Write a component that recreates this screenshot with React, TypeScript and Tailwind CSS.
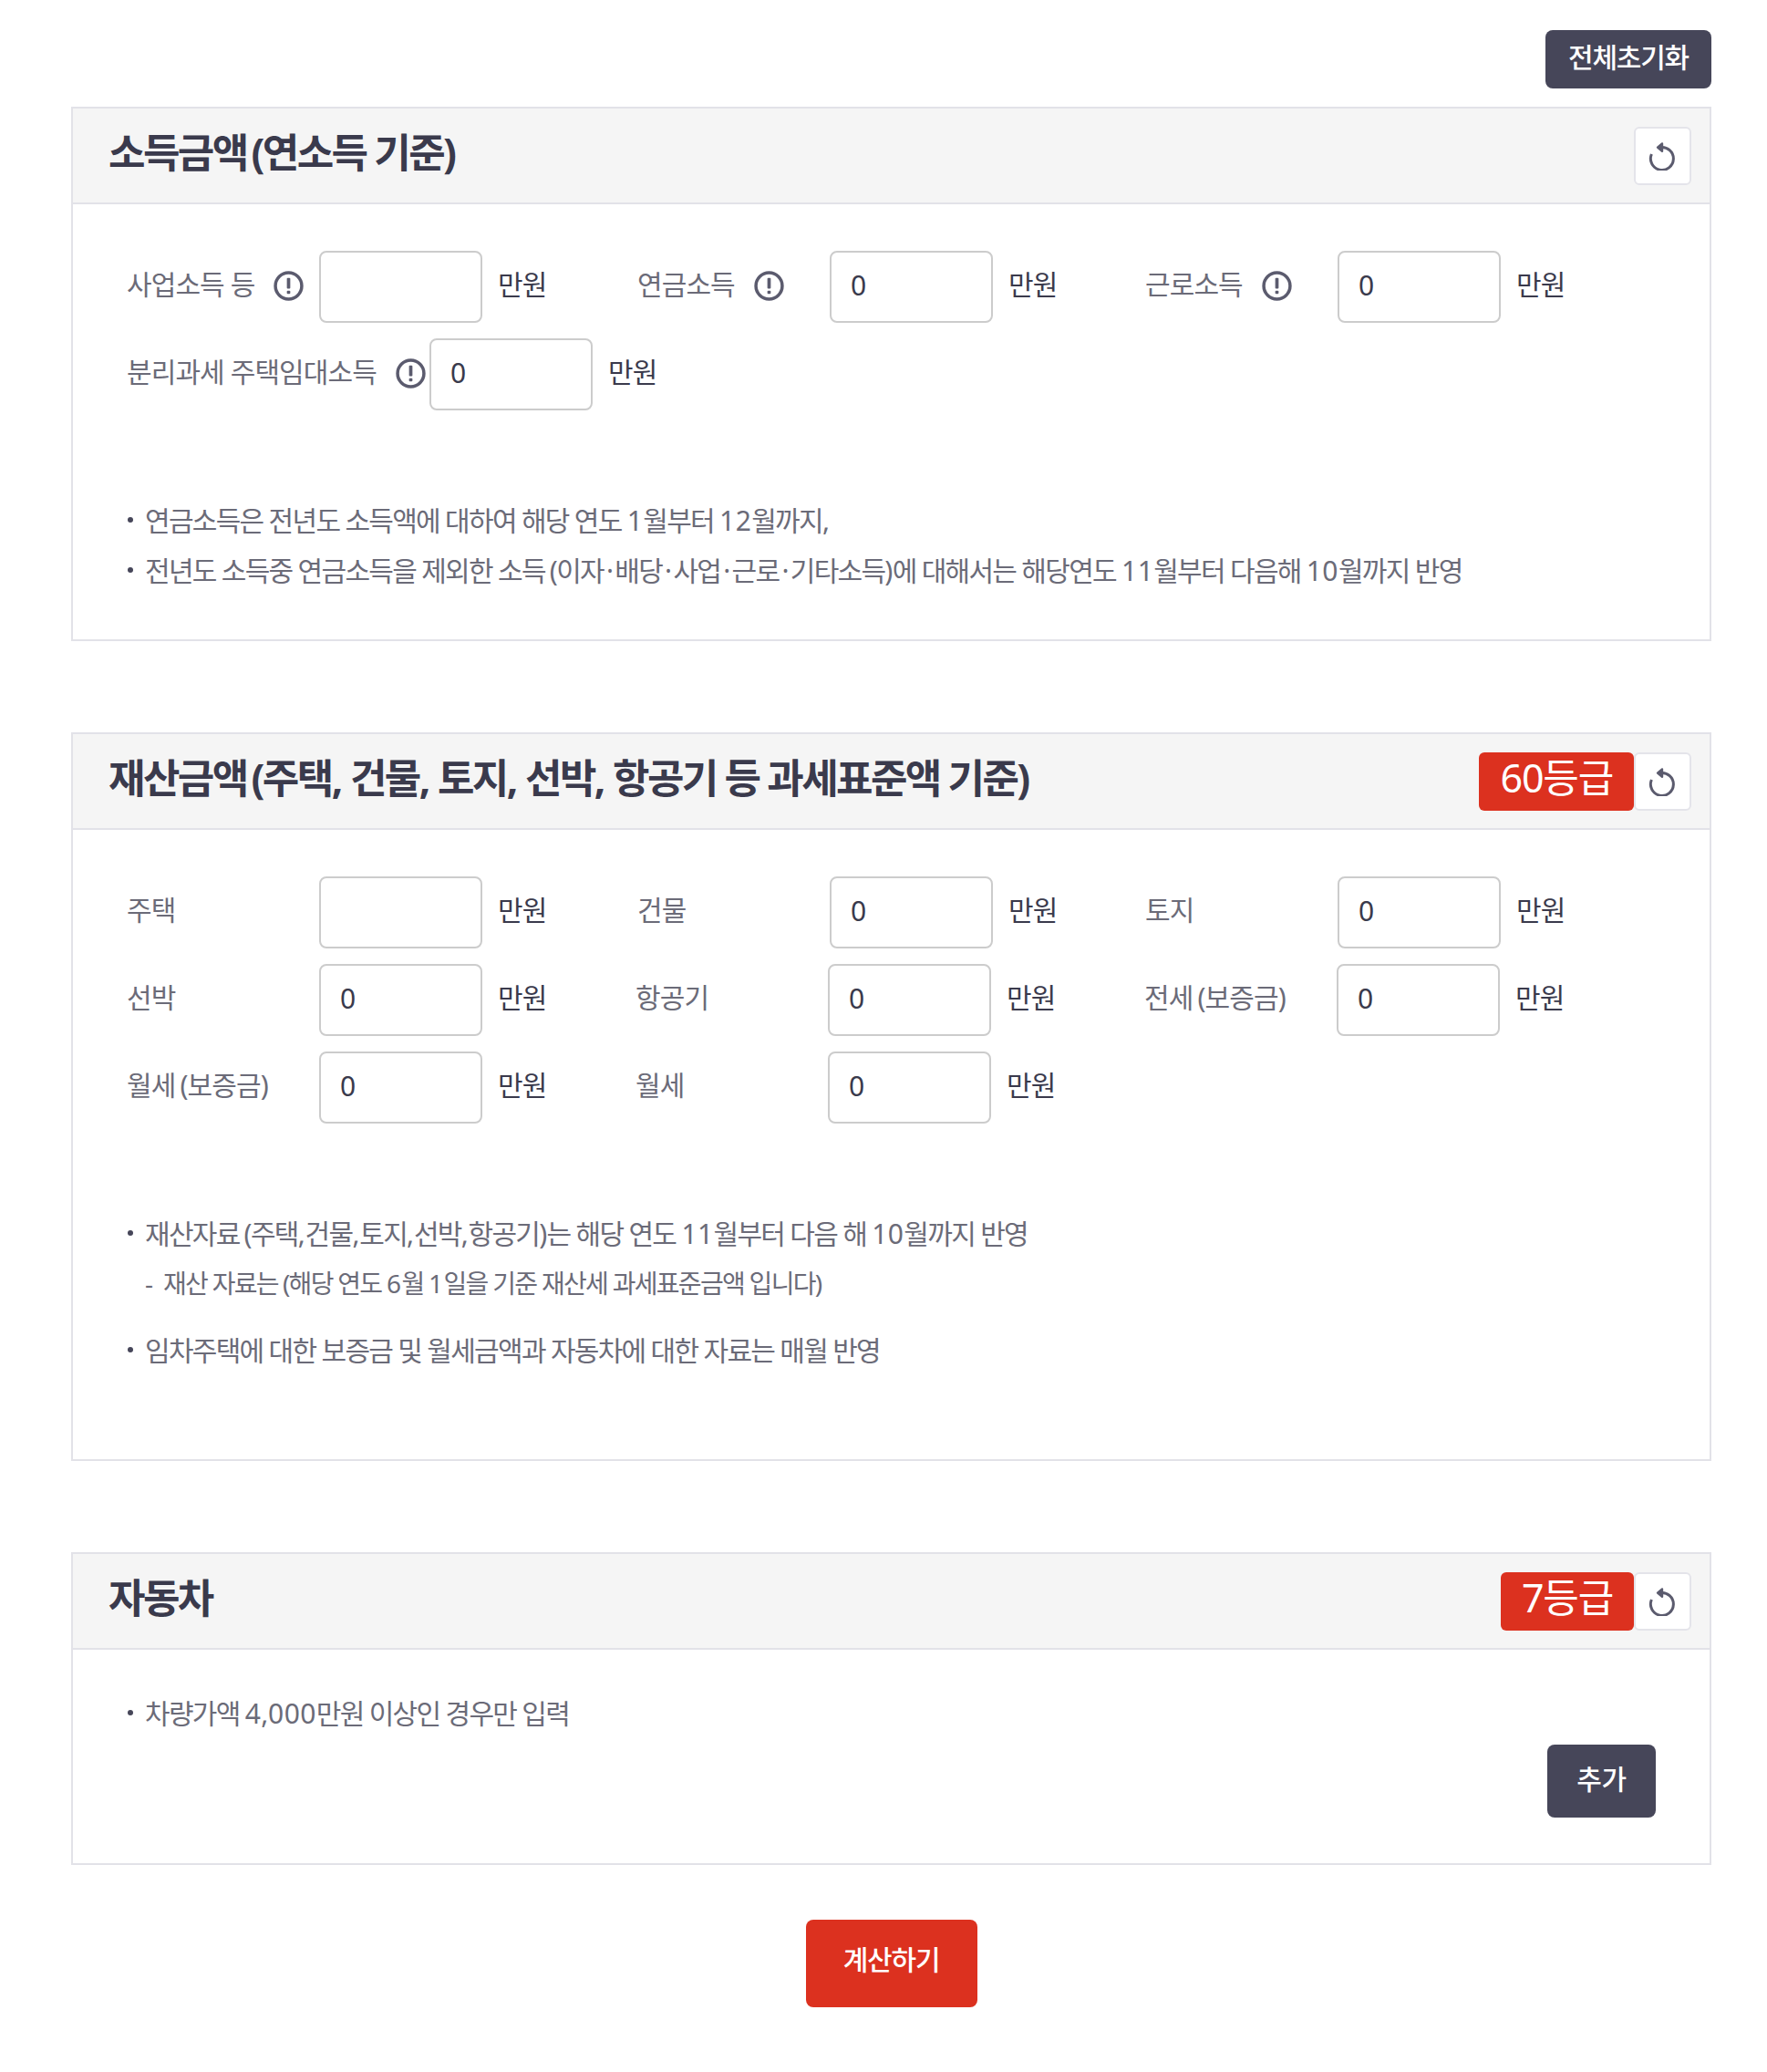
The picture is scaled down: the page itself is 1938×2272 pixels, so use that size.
import { Fragment } from "react";

// digits and punctuation sit wider in the original font than in Noto Sans
function Txt({ text }: { text: string }) {
  return (
    <>
      {text.split(/([0-9]+|[(),·])/).map((part, i) => {
        if (part === "(") return <span key={i} className="ml-[5px]">(</span>;
        if (part === ")") return <span key={i} className="mr-[1px]">)</span>;
        if (part === ",") return <span key={i} className="mr-[1.5px]">,</span>;
        if (part === "·") return <span key={i} className="mx-[3px]">·</span>;
        if (/^[0-9]+$/.test(part)) return <span key={i} className="tracking-[0.4px]">{part}</span>;
        return <Fragment key={i}>{part}</Fragment>;
      })}
    </>
  );
}

function RefreshIcon() {
  return (
    <svg viewBox="0 0 32 32" className="w-[32px] h-[32px] -ml-[1px]" fill="none" stroke="#5b5b6e" strokeWidth="3">
      <path d="M14 6.6 A12.5 12.5 0 1 1 4.4 14" />
      <path d="M16 2.5 L11 6.6 L16 10.8 Z" fill="#5b5b6e" strokeWidth="2.4" strokeLinejoin="round" />
    </svg>
  );
}

function InfoIcon() {
  return (
    <svg viewBox="0 0 32 32" className="w-[33px] h-[33px] shrink-0 ml-[21px] -mt-[2px]" fill="none">
      <circle cx="16" cy="16" r="14" stroke="#5b5b6e" strokeWidth="3.4" />
      <rect x="14.2" y="7.5" width="3.6" height="11.5" rx="1" fill="#5b5b6e" />
      <rect x="14.2" y="21" width="3.6" height="3.4" rx="1" fill="#5b5b6e" />
    </svg>
  );
}

function Field({ label, value, info, width, labelWidth = 211 }: { label: string; value?: string; info?: boolean; width: string; labelWidth?: number }) {
  return (
    <div className={`flex items-center h-[79px] ${width}`}>
      <div className="flex items-center shrink-0" style={{ width: labelWidth }}>
        <span className="text-[30px] tracking-[-0.9px] text-[#6b6b78] whitespace-nowrap pb-[7px]"><Txt text={label} /></span>
        {info && <InfoIcon />}
      </div>
      <div className="w-[179px] h-[79px] shrink-0 border-2 border-[#cccccc] rounded-[8px] bg-white flex items-center pl-[21px] pb-[5px] text-[30px] text-[#3a3a4c]">
        {value}
      </div>
      <span className="ml-[17px] text-[30px] tracking-[-0.9px] text-[#3a3a4c] whitespace-nowrap pb-[7px]">만원</span>
    </div>
  );
}

function Header({ title, grade }: { title: string; grade?: string }) {
  return (
    <div className="h-[105px] bg-[#f5f5f5] border-b-2 border-[#e2e2e8] flex items-center justify-between pl-[39px] pr-[20px]">
      <h2 className="text-[44px] font-bold tracking-[-2.6px] text-[#3a3a4c] -mt-[8px]"><Txt text={title} /></h2>
      <div className="flex items-center">
        {grade && (
          <span className="h-[64px] px-[23px] pb-[7px] flex items-center bg-[#dc311f] text-white text-[43px] rounded-[6px] tracking-[-1.2px]">
            {grade}
          </span>
        )}
        <button className="w-[63px] h-[64px] bg-white border-2 border-[#e4e4ea] rounded-[6px] flex items-center justify-center">
          <RefreshIcon />
        </button>
      </div>
    </div>
  );
}

function Note({ text, sub }: { text: string; sub?: boolean }) {
  if (sub) {
    return (
      <p className="flex items-center h-[42px] pl-[20px] text-[28px] tracking-[-1.7px] text-[#6b6b78] whitespace-nowrap">
        <span className="w-[20px] shrink-0">-</span>
        <span><Txt text={text} /></span>
      </p>
    );
  }
  return (
    <p className="flex items-center h-[42px] text-[30px] tracking-[-1.7px] text-[#6b6b78] whitespace-nowrap">
      <span className="w-[6px] h-[6px] shrink-0 rounded-full bg-[#464659] ml-[1px] mr-[13px]" />
      <span><Txt text={text} /></span>
    </p>
  );
}

export default function App() {
  return (
    <div className="font-['Noto_Sans','Noto_Sans_CJK_KR',sans-serif] w-[1938px] h-[2272px] bg-white">
      <div className="pl-[78px] pr-[61px] pt-[33px]">
        <div className="flex justify-end h-[84px]">
          <button className="w-[182px] h-[64px] pb-[6px] bg-[#464659] text-white text-[30px] font-medium tracking-[-1.2px] rounded-[8px]">전체초기화</button>
        </div>

        <section className="border-2 border-[#e2e2e8] h-[586px]">
          <Header title="소득금액(연소득 기준)" />
          <div className="pl-[59px] pt-[51px]">
            <div className="flex flex-col gap-[17px]">
              <div className="flex">
                <Field label="사업소득 등" info width="w-[560px]" />
                <Field label="연금소득" info value="0" width="w-[557px]" />
                <Field label="근로소득" info value="0" width="w-[500px]" />
              </div>
              <div className="flex">
                <Field label="분리과세 주택임대소득" info value="0" width="w-[700px]" labelWidth={332} />
              </div>
            </div>
            <div className="mt-[99px] flex flex-col gap-[13px]">
              <Note text="연금소득은 전년도 소득액에 대하여 해당 연도 1월부터 12월까지," />
              <Note text="전년도 소득중 연금소득을 제외한 소득(이자·배당·사업·근로·기타소득)에 대해서는 해당연도 11월부터 다음해 10월까지 반영" />
            </div>
          </div>
        </section>

        <section className="mt-[100px] border-2 border-[#e2e2e8] h-[799px]">
          <Header title="재산금액(주택, 건물, 토지, 선박, 항공기 등 과세표준액 기준)" grade="60등급" />
          <div className="pl-[59px] pt-[51px]">
            <div className="flex flex-col gap-[17px]">
              <div className="flex">
                <Field label="주택" width="w-[560px]" />
                <Field label="건물" value="0" width="w-[557px]" />
                <Field label="토지" value="0" width="w-[500px]" />
              </div>
              <div className="flex">
                <Field label="선박" value="0" width="w-[558px]" />
                <Field label="항공기" value="0" width="w-[558px]" />
                <Field label="전세(보증금)" value="0" width="w-[500px]" />
              </div>
              <div className="flex">
                <Field label="월세(보증금)" value="0" width="w-[558px]" />
                <Field label="월세" value="0" width="w-[558px]" />
              </div>
            </div>
            <div className="mt-[99px] flex flex-col gap-[13px]">
              <Note text="재산자료(주택,건물,토지,선박,항공기)는 해당 연도 11월부터 다음 해 10월까지 반영" />
              <Note sub text="재산 자료는(해당 연도 6월 1일을 기준 재산세 과세표준금액 입니다)" />
              <div className="mt-[18px]">
                <Note text="임차주택에 대한 보증금 및 월세금액과 자동차에 대한 자료는 매월 반영" />
              </div>
            </div>
          </div>
        </section>

        <section className="mt-[100px] border-2 border-[#e2e2e8] h-[343px]">
          <Header title="자동차" grade="7등급" />
          <div className="pl-[59px] pr-[59px] pt-[48px]">
            <Note text="차량가액 4,000만원 이상인 경우만 입력" />
            <div className="flex justify-end mt-[14px]">
              <button className="w-[119px] h-[80px] pb-[6px] bg-[#464659] text-white text-[30px] font-medium tracking-[-0.4px] rounded-[8px]">추가</button>
            </div>
          </div>
        </section>

        <div className="flex justify-center mt-[60px]">
          <button className="w-[188px] h-[96px] pb-[9px] bg-[#dc311f] text-white text-[30px] font-medium tracking-[-1.2px] rounded-[8px]">계산하기</button>
        </div>
      </div>
    </div>
  );
}
